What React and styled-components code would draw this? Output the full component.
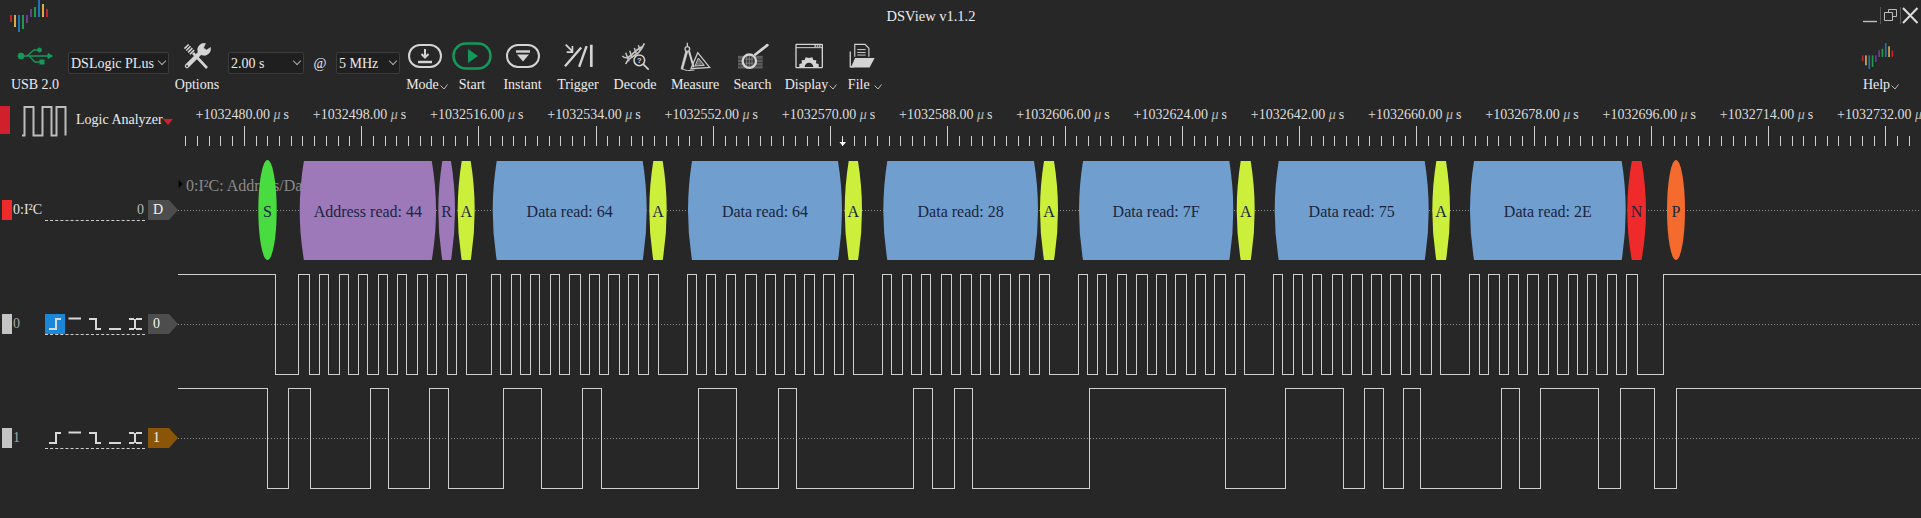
import styled, { createGlobalStyle } from 'styled-components';

const BG = '#272727';
const LINE = '#cfcfcf';
const ICON = '#d4d4d4';
const GREEN = '#14995a';
const FONT = `'Liberation Serif', 'Times New Roman', serif`;

const SCL_EDGES = [
  275, 298, 309, 319, 328, 339, 348, 358, 367, 378, 387, 397, 406, 417, 427, 436, 447, 456, 466,
  491, 500, 511, 520, 530, 539, 550, 559, 569, 580, 589, 599, 608, 619, 628, 638, 648, 658,
  687, 696, 706, 715, 726, 735, 745, 756, 765, 775, 784, 795, 804, 814, 823, 834, 843, 853,
  882, 891, 902, 911, 921, 930, 941, 951, 960, 971, 980, 990, 999, 1010, 1019, 1029, 1039, 1049,
  1078, 1087, 1097, 1106, 1117, 1126, 1136, 1147, 1156, 1166, 1175, 1186, 1195, 1205, 1214, 1225, 1235, 1244,
  1273, 1282, 1293, 1302, 1312, 1321, 1332, 1342, 1351, 1362, 1371, 1381, 1390, 1401, 1410, 1420, 1431, 1440,
  1469, 1479, 1488, 1499, 1508, 1518, 1527, 1538, 1548, 1557, 1568, 1577, 1587, 1596, 1607, 1616, 1626, 1637, 1663,
];

const SDA_EDGES = [
  267, 288, 310, 370, 388, 429, 448, 503, 541, 582, 601, 698, 736, 778, 796, 913, 932, 954, 972,
  1089, 1225, 1285, 1343, 1364, 1383, 1403, 1420, 1501, 1519, 1540, 1598, 1620, 1654, 1676,
];

const BLOCKS = [
  { kind: 'ellipse', left: 258.3, right: 276.7, fill: '#49dc41', text: 'S' },
  { left: 299.7, right: 436, inset: 4.2, fill: '#9d79b9', text: 'Address read: 44' },
  { left: 438.3, right: 455, inset: 4, fill: '#9d79b9', text: 'R' },
  { left: 457.7, right: 474.7, inset: 4, fill: '#cbef3a', text: 'A' },
  { left: 492.7, right: 646.7, inset: 4, fill: '#709ece', text: 'Data read: 64' },
  { left: 649.3, right: 666.7, inset: 4, fill: '#cbef3a', text: 'A' },
  { left: 688, right: 842, inset: 4, fill: '#709ece', text: 'Data read: 64' },
  { left: 844.7, right: 862, inset: 4, fill: '#cbef3a', text: 'A' },
  { left: 883.3, right: 1038, inset: 4, fill: '#709ece', text: 'Data read: 28' },
  { left: 1040, right: 1058, inset: 4, fill: '#cbef3a', text: 'A' },
  { left: 1079, right: 1233.3, inset: 4, fill: '#709ece', text: 'Data read: 7F' },
  { left: 1236.7, right: 1254.7, inset: 4, fill: '#cbef3a', text: 'A' },
  { left: 1274.7, right: 1428.7, inset: 4, fill: '#709ece', text: 'Data read: 75' },
  { left: 1432.3, right: 1450, inset: 4, fill: '#cbef3a', text: 'A' },
  { left: 1470, right: 1625.7, inset: 4, fill: '#709ece', text: 'Data read: 2E' },
  { left: 1627.3, right: 1646, inset: 4.5, fill: '#ee2a2a', text: 'N' },
  { kind: 'ellipse', left: 1667, right: 1685, fill: '#f56b2d', text: 'P' },
];

const LOGO_BARS = [
  [9, 15, 22, '#c0242c'], [13, 15, 27, '#d9ab4c'], [17, 15, 32, '#1c75b4'], [21, 15, 29, '#1f9a4d'], [25, 15, 23, '#6a3d9a'],
  [29, 9, 17, '#6a3d9a'], [33, 7, 17, '#1f9a4d'], [37, 0, 17, '#1c75b4'], [41, 4, 17, '#d9ab4c'], [45, 9, 17, '#c0242c'],
];

const RULER_LABELS = Array.from({ length: 15 }, (_, i) => `+${1032480 + i * 18}.00`);

function wavePath(edges, high, low) {
  let level = high;
  let d = `M178 ${high}`;
  edges.forEach((x) => {
    level = level === high ? low : high;
    d += ` H${x + 0.5} V${level}`;
  });
  return `${d} H1921`;
}

function blockPath({ left, right, inset }) {
  const top = 161;
  const bottom = 260;
  const mid = 210.5;
  const l = left + inset;
  const r = right - inset;
  return `M${l} ${top} H${r} Q${right} 186 ${right} ${mid} Q${right} 235 ${r} ${bottom} H${l} Q${left} 235 ${left} ${mid} Q${left} 186 ${l} ${top} Z`;
}

function rulerTicks() {
  const ticks = [];
  for (let k = -5; 244.3 + k * 11.725 < 1915; k++) {
    const x = Math.floor(244.3 + k * 11.725) + 0.5;
    const major = k % 10 === 0;
    ticks.push(<line key={k} x1={x} x2={x} y1={major ? 126 : 136} y2={146} />);
  }
  return ticks;
}

function Logo({ width }) {
  return (
    <svg width={width} height={width * 0.8} viewBox="8 0 40 32">
      {LOGO_BARS.map(([x, from, to, color]) => (
        <rect key={x} x={x} y={from} width="2" height={to - from} fill={color} />
      ))}
    </svg>
  );
}

function Chevron() {
  return (
    <ChevronSvg width="8" height="6" viewBox="0 0 8 6">
      <path d="M0.5 1.5 L4 5 L7.5 0.5" fill="none" stroke="#bbb" strokeWidth="1" />
    </ChevronSvg>
  );
}

function UsbIcon() {
  return (
    <svg width="36" height="18" viewBox="0 0 36 18" fill={GREEN} stroke={GREEN}>
      <circle cx="4" cy="9" r="3" />
      <path d="M4 9 H31 M10 9 L17 3 H21 M12 9 L18 15 H23" fill="none" strokeWidth="1.3" />
      <circle cx="22.5" cy="3" r="2" />
      <rect x="23" y="13" width="4" height="4" />
      <path d="M31 6.5 L35.5 9 L31 11.5 Z" />
    </svg>
  );
}

function ToolsIcon() {
  return (
    <svg width="28" height="27" viewBox="0 0 28 27" fill="none" stroke={ICON}>
      <path d="M3 3 L10 10" strokeWidth="6" strokeDasharray="1.6 1" />
      <path d="M10 10 L24 25" strokeWidth="2.6" />
      <path d="M4 23 L18 9" strokeWidth="4.5" strokeLinecap="round" />
      <path d="M22.5 0.5 A6.5 6.5 0 0 0 15 9 L19 12 A6.5 6.5 0 0 0 27.5 4.5 L23.5 7 L20.5 5 Z" fill={ICON} strokeWidth="0.5" />
      <circle cx="4" cy="23" r="1" fill={BG} stroke="none" />
    </svg>
  );
}

function ModeIcon() {
  return (
    <svg width="34" height="24" viewBox="0 0 34 24" fill="none" stroke={ICON}>
      <rect x="1" y="1" width="32" height="22" rx="11" strokeWidth="2" />
      <path d="M17 5 V13 M13.5 10 L17 13.5 L20.5 10" strokeWidth="2" />
      <path d="M10 18 H24" strokeWidth="2.4" />
    </svg>
  );
}

function StartIcon() {
  return (
    <svg width="40" height="28" viewBox="0 0 40 28" fill="none">
      <rect x="1.5" y="1.5" width="37" height="25" rx="12.5" stroke={GREEN} strokeWidth="2.6" />
      <path d="M16 7 L26 14 L16 21 Z" fill={GREEN} />
    </svg>
  );
}

function InstantIcon() {
  return (
    <svg width="34" height="24" viewBox="0 0 34 24" fill="none" stroke={ICON}>
      <rect x="1" y="1" width="32" height="22" rx="11" strokeWidth="2" />
      <path d="M10 7.5 H24" strokeWidth="2.4" />
      <path d="M11 10.5 H23 L17 17.5 Z" fill={ICON} stroke="none" />
    </svg>
  );
}

function TriggerIcon() {
  return (
    <svg width="31" height="25" viewBox="24 18 92 74" fill="none" stroke={ICON}>
      <path d="M32 20 L52 40 M52 24 V42 H35" strokeWidth="5" />
      <path d="M30 84 L78 28" strokeWidth="7" />
      <path d="M72 86 L94 24" strokeWidth="7" />
      <path d="M108 20 V86" strokeWidth="8" />
    </svg>
  );
}

function DecodeIcon() {
  return (
    <svg width="30" height="29" viewBox="195 10 90 87" fill="none" stroke="#c4c4c4">
      <path d="M202 52 C222 72 238 30 264 24" strokeWidth="5" />
      <path d="M212 76 C226 44 248 62 268 14" strokeWidth="5" />
      <path d="M212 42 L222 68 M224 36 L232 58 M238 28 L244 46 M250 20 L256 36" strokeWidth="4.5" />
      <circle cx="253" cy="65" r="16" fill={BG} strokeWidth="4.5" stroke={ICON} />
      <path d="M265 77 L281 93" strokeWidth="5" stroke={ICON} />
      <text x="253" y="73" textAnchor="middle" fontSize="23" fontWeight="700" fill={ICON} stroke="none" fontFamily="Liberation Sans, sans-serif">?</text>
    </svg>
  );
}

function MeasureIcon() {
  return (
    <svg width="32" height="29" viewBox="372 8 96 87" fill="none" stroke="#c8c8c8">
      <path d="M397 10 V22" strokeWidth="4" />
      <circle cx="397" cy="29" r="7" strokeWidth="4" />
      <path d="M392 36 L378 88 L383 90 L398 38 Z" fill={ICON} strokeWidth="2" />
      <path d="M402 36 L416 84" strokeWidth="6" stroke={ICON} />
      <path d="M428 40 L464 84 L408 88 Z" strokeWidth="4" />
      <path d="M430 56 L448 78 L420 80 Z" fill="#6a6a6a" strokeWidth="3" />
      <path d="M379 88 Q396 98 418 92" strokeWidth="3" />
    </svg>
  );
}

function SearchIcon() {
  return (
    <svg width="32" height="27" viewBox="545 12 96 80" fill="none" stroke={ICON}>
      <rect x="548" y="50" width="74" height="38" fill="#5e5e5e" stroke="none" />
      <path d="M548 60 H622 M548 70 H622 M548 80 H622" stroke={BG} strokeWidth="2" />
      <path d="M600 46 L636 18" strokeWidth="8" strokeLinecap="round" />
      <circle cx="582" cy="66" r="20" fill="#3a3a3a" strokeWidth="7" />
      <path d="M570 60 H594 M570 72 H594 M582 50 V84 M574 52 V80 M590 52 V80" stroke="#999" strokeWidth="2" />
    </svg>
  );
}

function DisplayIcon() {
  return (
    <svg width="29" height="26" viewBox="720 15 87 78" fill="none" stroke={ICON}>
      <rect x="723" y="19" width="79" height="70" rx="2" strokeWidth="4" />
      <path d="M723 29 H802" strokeWidth="3" />
      <path d="M778 24 H797" strokeWidth="5" strokeDasharray="5 2" />
      <path
        d="M733 87 V78 L741 76 L740 67 L749 66 L752 58 L762 60 L772 58 L775 66 L784 67 L783 76 L791 78 V87 H775 A13 13 0 0 0 749 87 Z"
        fill={ICON}
        stroke="none"
      />
    </svg>
  );
}

function FileIcon() {
  return (
    <svg width="27" height="26" viewBox="875 15 84 78" fill="none" stroke={ICON}>
      <path d="M882 40 V88 H892" strokeWidth="4" />
      <path d="M896 56 V18 H928 L940 30 V56" strokeWidth="3.5" />
      <path d="M904 34 H930 M904 43 H930 M904 51 H930" strokeWidth="3" />
      <path d="M884 90 L897 60 H958 L942 90 Z" fill={ICON} stroke="none" />
    </svg>
  );
}

function RisingEdge() {
  return <path d="M4 15 H11 V5 H16" />;
}
function HighLevel() {
  return <path d="M3.5 4.5 H16" />;
}
function FallingEdge() {
  return <path d="M4 5 H11 V15 H16" />;
}
function LowLevel() {
  return <path d="M4 15 H16" />;
}
function AnyEdge() {
  return <path d="M4 5 H9 M11 5 H17 M4 15 H9 M11 15 H17 M10 5 V15" />;
}

const TRIGGER_ICONS = [RisingEdge, HighLevel, FallingEdge, LowLevel, AnyEdge];

function TriggerButtons({ active }) {
  return (
    <TriggerBox>
      {TRIGGER_ICONS.map((Shape, i) => (
        <TriggerCell key={i} $active={i === active}>
          <svg width="20" height="20" viewBox="0 0 20 20" fill="none" stroke="#d8d8d8" strokeWidth="2">
            <Shape />
          </svg>
        </TriggerCell>
      ))}
    </TriggerBox>
  );
}

function Channel({ index, active, tagColor, edges, high, low, mid, top }) {
  return (
    <Row $height={114}>
      <LeftCell $top={47}>
        <Marker $color="#c4c4c4" />
        <ChannelName $dim>{index}</ChannelName>
        <TriggerButtons active={active} />
        <Tag $color={tagColor}>{index}</Tag>
      </LeftCell>
      <Plot viewBox={`178 ${top} 1743 114`} preserveAspectRatio="none">
        <line x1="178" x2="1921" y1={mid} y2={mid} stroke="#8c8c8c" strokeDasharray="1 2" />
        <path d={wavePath(edges, high, low)} fill="none" stroke={LINE} shapeRendering="crispEdges" />
      </Plot>
    </Row>
  );
}

export default function App() {
  return (
    <Page>
      <GlobalStyle />

      <TitleBar>
        <TitleSide>
          <Logo width={40} />
        </TitleSide>
        <Title>DSView v1.1.2</Title>
        <TitleSide $right>
          <svg width="60" height="26" viewBox="1861 0 60 26" fill="none" stroke="#bdbdbd">
            <path d="M1863 21.5 H1877" strokeWidth="1.4" />
            <path d="M1880.5 7 V24 M1900.5 7 V24" stroke="#555" />
            <path d="M1888.5 12.5 V9.5 H1896.5 V16.5 H1892 M1884.5 12.5 H1892.5 V20.5 H1884.5 Z" />
            <path d="M1903 8 L1917.5 23 M1917.5 8 L1903 23" strokeWidth="2" stroke="#dcdcdc" />
          </svg>
        </TitleSide>
      </TitleBar>

      <Toolbar>
        <Tool $width={54} $left={8}>
          <ToolIcon><UsbIcon /></ToolIcon>
          <ToolLabel>USB 2.0</ToolLabel>
        </Tool>
        <Select $width={101} $left={6}>DSLogic PLus</Select>
        <Tool $width={50} $left={3}>
          <ToolIcon><ToolsIcon /></ToolIcon>
          <ToolLabel>Options</ToolLabel>
        </Tool>
        <Select $width={76} $left={6}>2.00 s</Select>
        <At>@</At>
        <Select $width={64}>5 MHz</Select>
        <Tool $width={38} $left={8}>
          <ToolIcon $shift={-4}><ModeIcon /></ToolIcon>
          <ToolLabel>Mode<Chevron /></ToolLabel>
        </Tool>
        <Tool $width={40} $left={6}>
          <ToolIcon><StartIcon /></ToolIcon>
          <ToolLabel>Start</ToolLabel>
        </Tool>
        <Tool $width={39} $left={11}>
          <ToolIcon><InstantIcon /></ToolIcon>
          <ToolLabel>Instant</ToolLabel>
        </Tool>
        <Tool $width={42} $left={15}>
          <ToolIcon><TriggerIcon /></ToolIcon>
          <ToolLabel>Trigger</ToolLabel>
        </Tool>
        <Tool $width={44} $left={14}>
          <ToolIcon><DecodeIcon /></ToolIcon>
          <ToolLabel>Decode</ToolLabel>
        </Tool>
        <Tool $width={50} $left={13}>
          <ToolIcon><MeasureIcon /></ToolIcon>
          <ToolLabel>Measure</ToolLabel>
        </Tool>
        <Tool $width={39} $left={13}>
          <ToolIcon><SearchIcon /></ToolIcon>
          <ToolLabel>Search</ToolLabel>
        </Tool>
        <Tool $width={50} $left={14}>
          <ToolIcon $shift={-4}><DisplayIcon /></ToolIcon>
          <ToolLabel>Display<Chevron /></ToolLabel>
        </Tool>
        <Tool $width={36} $left={11}>
          <ToolIcon $shift={-8}><FileIcon /></ToolIcon>
          <ToolLabel>File <Chevron /></ToolLabel>
        </Tool>
        <HelpTool $width={38}>
          <ToolIcon $shift={-8}><Logo width={33} /></ToolIcon>
          <ToolLabel>Help<Chevron /></ToolLabel>
        </HelpTool>
      </Toolbar>

      <Row $height={54}>
        <HeaderCell>
          <Marker $color="#d0202c" $tall />
          <svg width="46" height="32" viewBox="24 106 46 32" fill="none" stroke="#bdbdbd" strokeWidth="2">
            <path d="M24 135.5 H26.5 V107 H35.5 V135.5 H44.5 V107 H53.5 V135.5 H58.5 V107 H67.5 V135.5" />
          </svg>
          <HeaderText>Logic Analyzer</HeaderText>
          <HeaderCaret />
        </HeaderCell>
        <RulerArea>
          <RulerLabels>
            {RULER_LABELS.map((value) => (
              <RulerLabel key={value}>
                {value} <Mu>μ</Mu>s
              </RulerLabel>
            ))}
          </RulerLabels>
          <RulerTicks viewBox="178 126 1743 24" preserveAspectRatio="none">
            <g stroke={LINE} shapeRendering="crispEdges">{rulerTicks()}</g>
            <path d="M842.5 139 V142" stroke="#fff" />
            <path d="M839.5 142 H846 L842.7 146 Z" fill="#fff" />
          </RulerTicks>
        </RulerArea>
      </Row>

      <Row $height={117}>
        <LeftCell $top={50}>
          <Marker $color="#ee2a2a" />
          <ChannelName>0:I²C</ChannelName>
          <TriggerBox $value>0</TriggerBox>
          <Tag $color="#4d4d4d">D</Tag>
        </LeftCell>
        <Plot viewBox="178 150 1743 117" preserveAspectRatio="none">
          <path d="M178.7 180 L182.5 184 L178.7 188 Z" fill="#000" />
          <DecoderTitle x="186" y="191">0:I²C: Address/Data</DecoderTitle>
          <line x1="178" x2="1921" y1="210.5" y2="210.5" stroke="#8c8c8c" strokeDasharray="1 2" />
          {BLOCKS.map((block, i) => (
            <g key={i}>
              {block.kind === 'ellipse' ? (
                <ellipse
                  cx={(block.left + block.right) / 2}
                  cy="210"
                  rx={(block.right - block.left) / 2}
                  ry="50"
                  fill={block.fill}
                />
              ) : (
                <path d={blockPath(block)} fill={block.fill} />
              )}
              <BlockText x={(block.left + block.right) / 2} y="216.5">{block.text}</BlockText>
            </g>
          ))}
        </Plot>
      </Row>

      <Channel index={0} active={0} tagColor="#4d4d4d" edges={SCL_EDGES} high={274.5} low={374.5} mid={324.5} top={267} />
      <Channel index={1} active={-1} tagColor="#8b5508" edges={SDA_EDGES} high={388.5} low={488.5} mid={438.5} top={381} />
    </Page>
  );
}

const GlobalStyle = createGlobalStyle`
  html, body {
    margin: 0;
    padding: 0;
    background: ${BG};
  }
`;

const Page = styled.div`
  width: 1921px;
  height: 518px;
  background: ${BG};
  overflow: hidden;

  display: flex;
  flex-direction: column;

  font-family: ${FONT};
  font-size: 14px;
  color: #ececec;
`;

const TitleBar = styled.header`
  height: 36px;
  flex-shrink: 0;

  display: flex;
`;

const TitleSide = styled.div`
  flex: 1;
  padding-left: ${(p) => (p.$right ? 0 : 9)}px;

  display: flex;
  justify-content: ${(p) => (p.$right ? 'flex-end' : 'flex-start')};
  align-items: flex-start;
`;

const Title = styled.div`
  padding-top: 8px;
  margin-right: 68px;
  font-size: 14.5px;
  line-height: 17px;
`;

const Toolbar = styled.div`
  height: 60px;
  flex-shrink: 0;

  display: flex;
  align-items: flex-start;
`;

const Tool = styled.div`
  width: ${(p) => p.$width}px;
  margin-left: ${(p) => p.$left || 0}px;

  display: flex;
  flex-direction: column;
  align-items: center;
`;

const HelpTool = styled(Tool)`
  margin-left: auto;
  margin-right: 21px;
`;

const ToolIcon = styled.div`
  height: 32px;
  margin: 4px 0 0 ${(p) => p.$shift || 0}px;

  display: flex;
  align-items: center;
  justify-content: center;
`;

const ToolLabel = styled.div`
  margin-top: 4px;
  line-height: 18px;
  white-space: pre;

  display: flex;
  align-items: center;
`;

const ChevronSvg = styled.svg`
  margin-left: 1px;
  margin-top: 3px;
`;

const Select = styled.div`
  width: ${(p) => p.$width}px;
  height: 22px;
  margin: 16px 0 0 ${(p) => p.$left || 0}px;
  padding-left: 2px;
  box-sizing: border-box;
  background: #1f1f1f;
  border: 1px solid #3c3c3c;
  border-radius: 2px;
  line-height: 21px;
  white-space: nowrap;

  display: flex;
  justify-content: space-between;

  &::after {
    content: '';
    width: 5px;
    height: 5px;
    margin: 5px 3px 0 0;
    border-right: 1px solid #aaa;
    border-bottom: 1px solid #aaa;
    transform: rotate(45deg);
  }
`;

const At = styled.div`
  width: 32px;
  margin-top: 20px;
  line-height: 16px;
  text-align: center;
`;

const Row = styled.div`
  height: ${(p) => p.$height}px;
  flex-shrink: 0;

  display: flex;
`;

const LeftCell = styled.div`
  width: 178px;
  flex-shrink: 0;
  padding: ${(p) => p.$top}px 0 0 2px;
  box-sizing: border-box;

  display: flex;
  align-items: flex-start;
`;

const HeaderCell = styled(LeftCell)`
  padding-top: 10px;
`;

const Marker = styled.div`
  width: 10px;
  height: ${(p) => (p.$tall ? 28 : 20)}px;
  margin-right: ${(p) => (p.$tall ? 12 : 0)}px;
  background: ${(p) => p.$color};
  flex-shrink: 0;
`;

const ChannelName = styled.div`
  width: 33px;
  padding-left: 1px;
  box-sizing: border-box;
  line-height: 20px;
  color: ${(p) => (p.$dim ? '#a8a8a8' : '#e4e4e4')};
`;

const TriggerBox = styled.div`
  width: 99px;
  height: 20px;
  padding-right: 1px;
  border-bottom: 1px dashed #cfcfcf;
  line-height: 20px;
  text-align: right;
  color: #bdbdbd;

  display: ${(p) => (p.$value ? 'block' : 'flex')};
`;

const TriggerCell = styled.div`
  width: 20px;
  height: 20px;
  background: ${(p) => (p.$active ? '#1a87d8' : 'transparent')};

  svg {
    display: block;
  }
`;

const Tag = styled.div`
  width: 30px;
  height: 20px;
  margin-left: 3px;
  padding-left: 5px;
  box-sizing: border-box;
  background: ${(p) => p.$color};
  clip-path: polygon(0 0, 21px 0, 30px 50%, 21px 100%, 0 100%);
  line-height: 20px;
  color: #f4f4f4;
`;

const HeaderText = styled.div`
  margin-left: 8px;
  margin-top: 4px;
  line-height: 20px;
  white-space: nowrap;
`;

const HeaderCaret = styled.div`
  width: 0;
  height: 0;
  margin-top: 13px;
  border-left: 5px solid transparent;
  border-right: 5px solid transparent;
  border-top: 6px solid #d0202c;
`;

const RulerArea = styled.div`
  flex: 1;
  min-width: 0;
  overflow: hidden;
`;

const RulerLabels = styled.div`
  height: 30px;
  padding: 10px 0 0 5.7px;
  box-sizing: border-box;

  display: flex;
`;

const RulerLabel = styled.div`
  width: 117.25px;
  flex-shrink: 0;
  line-height: 18px;
  text-align: center;
  white-space: nowrap;
  color: #dedede;
`;

const Mu = styled.span`
  font-style: italic;
  margin-right: 3px;
  color: #b8b8b8;
`;

const RulerTicks = styled.svg`
  display: block;
  width: 1743px;
  height: 24px;
`;

const Plot = styled.svg`
  display: block;
  width: 1743px;
  height: 100%;
  flex-shrink: 0;
`;

const DecoderTitle = styled.text`
  font-family: ${FONT};
  font-size: 16px;
  fill: #8a8a8a;
`;

const BlockText = styled.text`
  font-family: ${FONT};
  font-size: 16px;
  fill: #1a2540;
  text-anchor: middle;
`;
